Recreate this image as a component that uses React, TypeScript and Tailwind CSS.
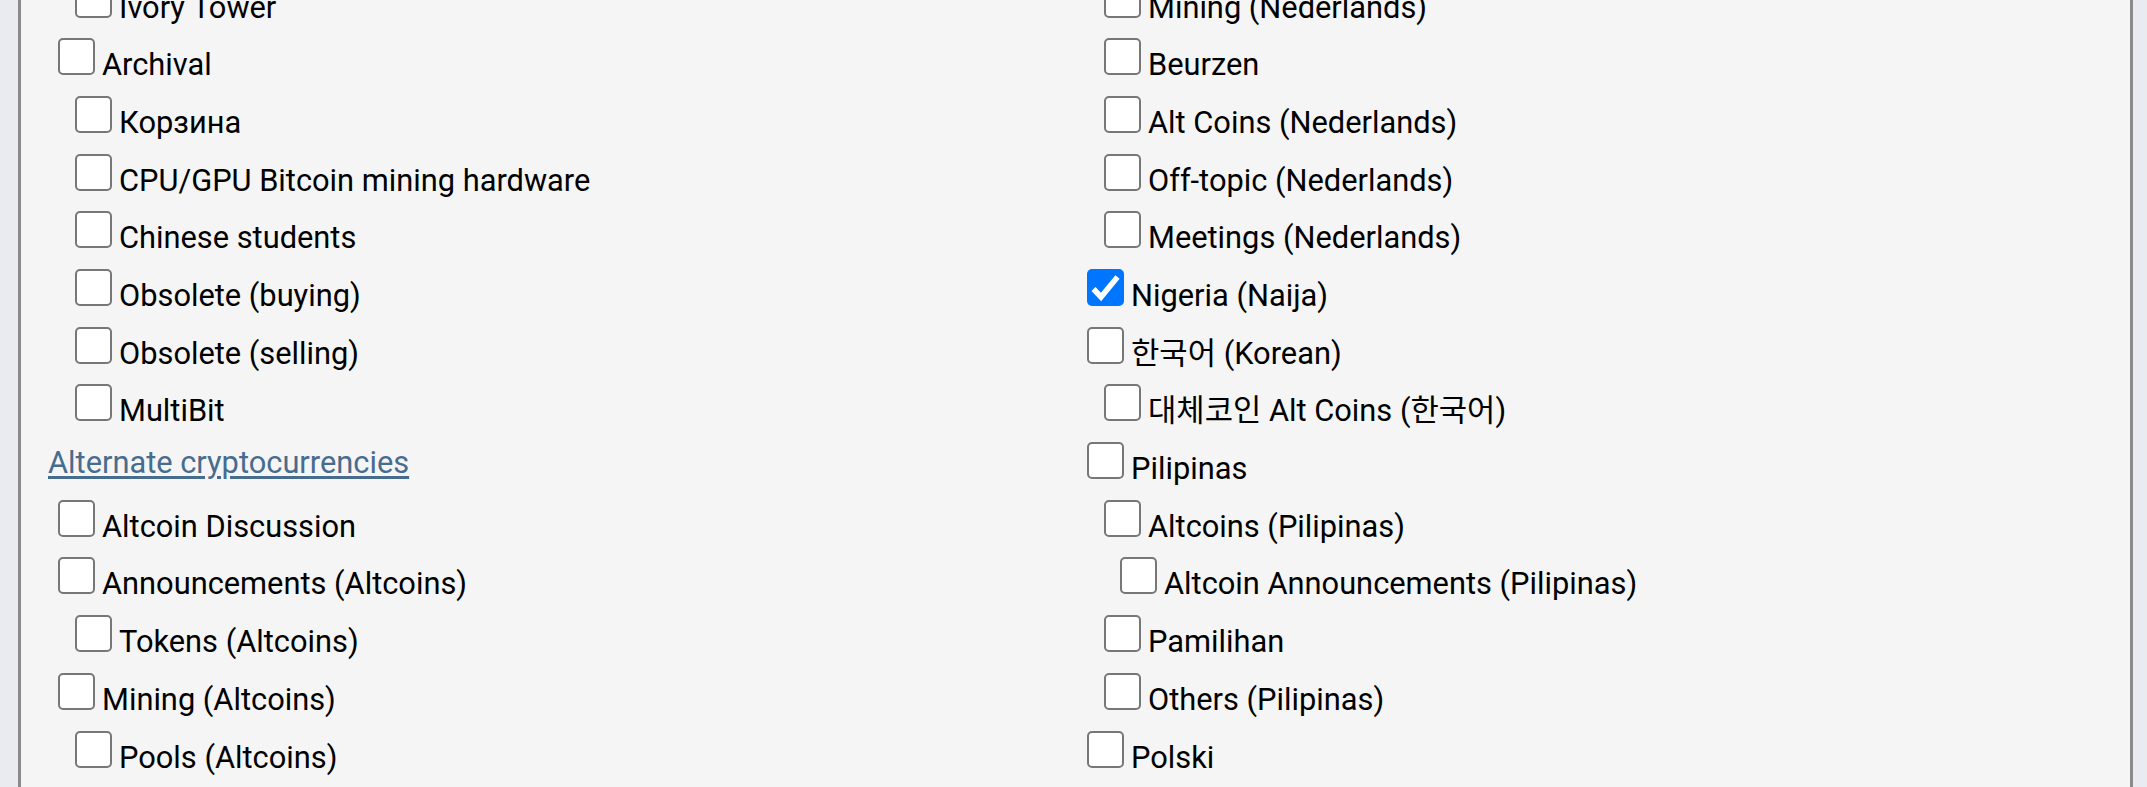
import React from "react";

interface BoardRow {
  label: string;
  level?: number;
  checked?: boolean;
  link?: boolean;
}

const leftColumn: BoardRow[] = [
  { label: "Ivory Tower", level: 1 },
  { label: "Archival", level: 0 },
  { label: "Корзина", level: 1 },
  { label: "CPU/GPU Bitcoin mining hardware", level: 1 },
  { label: "Chinese students", level: 1 },
  { label: "Obsolete (buying)", level: 1 },
  { label: "Obsolete (selling)", level: 1 },
  { label: "MultiBit", level: 1 },
  { label: "Alternate cryptocurrencies", link: true },
  { label: "Altcoin Discussion", level: 0 },
  { label: "Announcements (Altcoins)", level: 0 },
  { label: "Tokens (Altcoins)", level: 1 },
  { label: "Mining (Altcoins)", level: 0 },
  { label: "Pools (Altcoins)", level: 1 },
];

const rightColumn: BoardRow[] = [
  { label: "Mining (Nederlands)", level: 1 },
  { label: "Beurzen", level: 1 },
  { label: "Alt Coins (Nederlands)", level: 1 },
  { label: "Off-topic (Nederlands)", level: 1 },
  { label: "Meetings (Nederlands)", level: 1 },
  { label: "Nigeria (Naija)", level: 0, checked: true },
  { label: "한국어 (Korean)", level: 0 },
  { label: "대체코인 Alt Coins (한국어)", level: 1 },
  { label: "Pilipinas", level: 0 },
  { label: "Altcoins (Pilipinas)", level: 1 },
  { label: "Altcoin Announcements (Pilipinas)", level: 2 },
  { label: "Pamilihan", level: 1 },
  { label: "Others (Pilipinas)", level: 1 },
  { label: "Polski", level: 0 },
];

const indent = ["ml-[10px]", "ml-[27px]", "ml-[43px]"];

const Checkbox = ({ checked }: { checked?: boolean }) => {
  if (checked) {
    return (
      <span className="inline-block w-[37px] h-[37px] shrink-0 rounded-[5px] bg-[#0075ff] mr-[7px]">
        <svg viewBox="0 0 37 37" className="w-full h-full">
          <path d="M6.5 20 L14 28 L30.5 8" fill="none" stroke="#fff" strokeWidth="5.5" strokeLinejoin="miter" />
        </svg>
      </span>
    );
  }
  return (
    <span className="inline-block w-[37px] h-[37px] shrink-0 rounded-[5px] border-2 border-[#777] bg-white mr-[7px]"></span>
  );
};

const Row = ({ row }: { row: BoardRow }) => {
  // Category heading link
  if (row.link) {
    return (
      <div className="h-[57.7px] pt-[8px]">
        <a href="#" className="leading-none text-[#476c8e] underline decoration-[2.5px] underline-offset-[3px]">
          {row.label}
        </a>
      </div>
    );
  }

  return (
    <div className="h-[57.7px] pt-[10px]">
      <label className={`flex items-baseline ${indent[row.level ?? 0]}`}>
        <Checkbox checked={row.checked} />
        <span className="leading-none whitespace-nowrap">{row.label}</span>
      </label>
    </div>
  );
};

export default function App() {
  return (
    <div className="h-[787px] overflow-hidden bg-[#e9ebf0] pl-[18px] pr-[14px]">
      <div
        className="h-full overflow-hidden bg-[#f5f5f5] border-x-[3px] border-[#8a8a8a] pl-[27px] text-[30.8px] text-black"
        style={{ fontFamily: 'Roboto, "Noto Sans CJK KR", sans-serif' }}
      >
        <div className="grid grid-cols-[1029px_1fr] -mt-[29.4px]">
          {/* Left column */}
          <div>
            {leftColumn.map((row, idx) => (
              <Row key={idx} row={row} />
            ))}
          </div>
          {/* Right column */}
          <div>
            {rightColumn.map((row, idx) => (
              <Row key={idx} row={row} />
            ))}
          </div>
        </div>
      </div>
    </div>
  );
}
